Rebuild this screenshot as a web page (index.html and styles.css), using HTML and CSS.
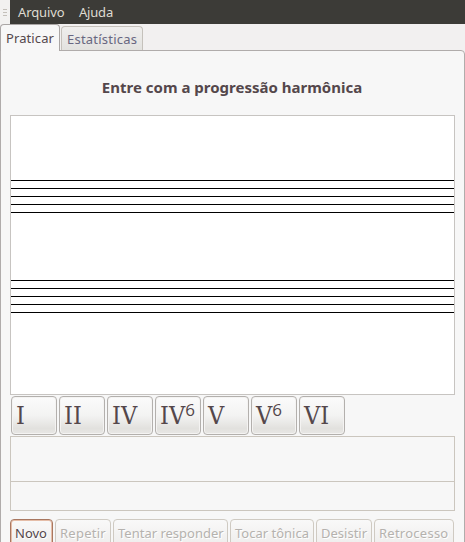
FILE: index.html
```html
<!DOCTYPE html>
<html lang="pt">
<head>
<meta charset="utf-8">
<title>Praticar</title>
<link rel="stylesheet" href="styles.css">
</head>
<body>
<nav class="menubar">
  <div class="grip"><i></i><i></i><i></i></div>
  <span class="menu arquivo">Arquivo</span><span class="menu ajuda">Ajuda</span>
</nav>
<div class="tabs">
  <div class="tab active"><span>Praticar</span></div>
  <div class="tab"><span>Estatísticas</span></div>
</div>
<main class="panel">
  <h1><span>Entre com a progressão harmônica</span></h1>
  <div class="score">
    <div class="staff"><i></i><i></i><i></i><i></i><i></i></div>
    <div class="staff"><i></i><i></i><i></i><i></i><i></i></div>
  </div>
  <div class="chords">
    <button>I</button><button>II</button><button>IV</button><button>IV<sup>6</sup></button><button>V</button><button>V<sup>6</sup></button><button>VI</button>
  </div>
  <div class="answer"></div>
  <div class="status"></div>
  <div class="actions">
    <button class="novo">Novo</button>
    <button class="repetir" disabled>Repetir</button>
    <button class="tentar" disabled>Tentar responder</button>
    <button class="tocar" disabled>Tocar tônica</button>
    <button class="desistir" disabled>Desistir</button>
    <button class="retrocesso" disabled>Retrocesso</button>
  </div>
</main>
</body>
</html>
```

FILE: styles.css
```css
* { box-sizing: border-box; }
body {
  margin: 0;
  width: 465px;
  height: 542px;
  overflow: hidden;
  display: flex;
  flex-direction: column;
  background: #f2f0f0;
  color: #54474b;
  font: 13px/18px "Noto Sans", sans-serif;
  white-space: nowrap;
}
button { font: inherit; color: inherit; margin: 0; white-space: nowrap; }
.menubar { display: flex; flex: none; height: 24px; background: #3c3b37; color: #dfdbd2; }
.grip {
  width: 10px;
  margin-right: 8px;
  padding: 9px 3px 0;
  display: flex;
  flex-direction: column;
  gap: 2px;
  background: #f2f1f0;
}
.grip i { height: 1px; background: #c4c0ba; }
.menu { padding-top: 3px; }
.arquivo { width: 61px; letter-spacing: -0.1px; }
.ajuda { letter-spacing: -0.2px; }
.tabs { display: flex; flex: none; height: 26px; align-items: flex-end; gap: 1px; }
.tab {
  width: 82px;
  height: 24px;
  padding: 3px 0 0 5px;
  border: 1px solid #c5c1bb;
  border-bottom: 0;
  border-radius: 4px 4px 0 0;
  background: linear-gradient(#efeeed, #e3e2df);
  color: #686780;
  letter-spacing: 0.22px;
}
.tab.active {
  width: 60px;
  height: 27px;
  margin-bottom: -1px;
  padding-top: 4px;
  border-color: #aaa6a5;
  background: #f7f7f7;
  color: #54474b;
  letter-spacing: 0.1px;
  z-index: 1;
}
.panel {
  flex: none;
  height: 500px;
  padding: 0 9px;
  border: 1px solid #b0acab;
  border-radius: 0 4px 0 0;
  background: #f7f7f7;
}
h1 { margin: 0; height: 64px; padding: 26px 1px 0 0; text-align: center; font-size: 15px; line-height: 20px; }
.score {
  height: 280px;
  padding-top: 64px;
  border: 1px solid #c7c4c1;
  background: #fff;
  display: flex;
  flex-direction: column;
  gap: 67px;
}
.staff { display: flex; flex-direction: column; gap: 7px; }
.staff i { height: 1px; background: #000; }
.chords { display: flex; gap: 2px; padding: 1px 0 0 1px; height: 41px; }
.chords button {
  width: 46px;
  height: 39px;
  padding: 0 0 0 4px;
  text-align: left;
  font: 25px/37px "DejaVu Serif Condensed", "DejaVu Serif", serif;
  border: 1px solid #b3b0ad;
  border-radius: 4px;
  background: linear-gradient(#fbfbfb, #f3f3f2 50%, #e2e1de 85%, #e8e7e5);
  box-shadow: inset 0 0 0 1px #f4f3f2;
}
.chords sup { font: 17px/10px "Open Sans", "Noto Sans", sans-serif; vertical-align: 8px; }
.answer, .status { border: 1px solid #cbc6be; }
.answer { height: 46px; }
.status { height: 30px; margin-top: -1px; }
.actions { display: flex; gap: 2px; padding-top: 8px; }
.actions button {
  height: 29px;
  padding: 0 0 2px 4px;
  text-align: left;
  border: 1px solid #cfcac2;
  border-radius: 4px;
  background: linear-gradient(#f9f9f9, #efeeed 85%);
  color: #b5b2ae;
  text-shadow: 1px 1px #fff;
}
.actions .novo { width: 43px; border: 1px solid #a87760; box-shadow: inset 0 0 0 1px #e5bda8; color: #54474b; }
.repetir { width: 56px; letter-spacing: 0.25px; }
.tentar { width: 115px; }
.tocar { width: 84px; }
.desistir { width: 56px; }
.retrocesso { width: 80px; letter-spacing: 0.25px; }
```
